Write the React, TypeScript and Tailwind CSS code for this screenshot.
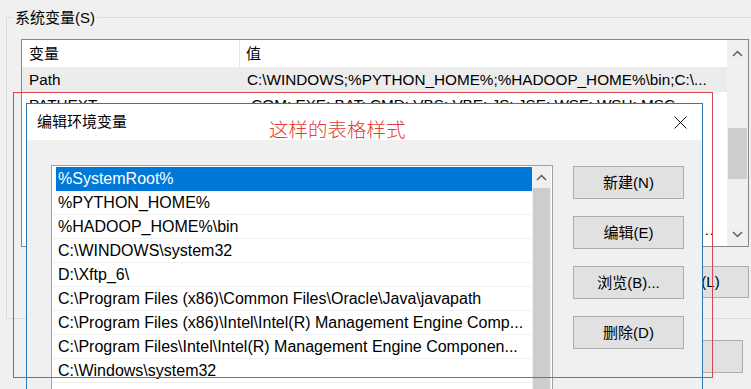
import React from "react";

const bgRows: [string, string][] = [
  ["Path", "C:\\WINDOWS;%PYTHON_HOME%;%HADOOP_HOME%\\bin;C:\\..."],
  ["PATHEXT", ".COM;.EXE;.BAT;.CMD;.VBS;.VBE;.JS;.JSE;.WSF;.WSH;.MSC"],
  ["PROCESSOR_ARCHITECTURE", "AMD64"],
  ["PROCESSOR_IDENTIFIER", "Intel64 Family 6 Model 142 Stepping 10, GenuineIntel"],
  ["PROCESSOR_LEVEL", "6"],
  ["PROCESSOR_REVISION", "8e0a"],
  ["PSModulePath", "%ProgramFiles%\\WindowsPowerShell\\Modules;C:\\WINDOWS\\system32\\WindowsPowerShell\\v1.0\\Modules"],
  ["TEMP", "C:\\WINDOWS\\TEMP"],
];

const dlgRows = [
  "%SystemRoot%",
  "%PYTHON_HOME%",
  "%HADOOP_HOME%\\bin",
  "C:\\WINDOWS\\system32",
  "D:\\Xftp_6\\",
  "C:\\Program Files (x86)\\Common Files\\Oracle\\Java\\javapath",
  "C:\\Program Files (x86)\\Intel\\Intel(R) Management Engine Comp...",
  "C:\\Program Files\\Intel\\Intel(R) Management Engine Componen...",
  "C:\\Windows\\system32",
  "",
];

function ChevronUp() {
  return (
    <svg width="11" height="7" viewBox="0 0 11 7">
      <polyline points="1,6 5.5,1.5 10,6" fill="none" stroke="#606060" strokeWidth="1.5" />
    </svg>
  );
}
function ChevronDown() {
  return (
    <svg width="11" height="7" viewBox="0 0 11 7">
      <polyline points="1,1 5.5,5.5 10,1" fill="none" stroke="#606060" strokeWidth="1.5" />
    </svg>
  );
}

function WinButton({ label, className = "" }: { label: string; className?: string }) {
  return (
    <div
      className={
        "flex items-center justify-center bg-[#e1e1e1] border border-[#adadad] text-[15px] text-black whitespace-nowrap " +
        className
      }
    >
      {label}
    </div>
  );
}

export default function App() {
  return (
    <div className="relative w-[751px] h-[389px] overflow-hidden bg-[#f0f0f0] font-['Liberation_Sans','Noto_Sans_CJK_SC',sans-serif] text-[15px] text-black leading-[20px]">
      {/* Background window: system variables */}
      <div className="pt-[17px] pl-[6px]">
        <div className="relative w-[800px] h-[302px] border-t border-l border-b border-[#dcdcdc] pl-[14px] pt-[21px]">
          <div className="absolute left-[6px] top-[-10px] px-[2px] bg-[#f0f0f0] h-[20px] flex items-center">
            系统变量(S)
          </div>
          <div className="w-[728px] h-[208px] border border-[#828790] bg-white flex overflow-hidden">
            <div className="flex-1 flex flex-col min-w-0">
              <div className="h-[27px] flex items-center shrink-0">
                <div className="w-[218px] pl-[7px] h-full flex items-center border-r border-[#e5e5e5]">变量</div>
                <div className="pl-[6px]">值</div>
              </div>
              {bgRows.map(([k, v], i) => (
                <div
                  key={k}
                  className={
                    "h-[25px] flex items-center shrink-0 text-[15.3px] " + (i === 0 ? "bg-[#ececec]" : "")
                  }
                >
                  <div className="w-[218px] pl-[7px] whitespace-nowrap overflow-hidden">{k}</div>
                  <div className="w-[478px] pl-[7px] whitespace-nowrap overflow-hidden text-ellipsis">{v}</div>
                </div>
              ))}
            </div>
            <div className="w-[21px] shrink-0 bg-[#f0f0f0] flex flex-col items-center">
              <div className="h-[25px] flex items-center justify-center mt-[1px]">
                <ChevronUp />
              </div>
              <div className="h-[62px]" />
              <div className="w-[19px] h-[51px] bg-[#cdcdcd]" />
              <div className="flex-1" />
              <div className="h-[22px] flex items-center justify-center mb-[1px]">
                <ChevronDown />
              </div>
            </div>
          </div>
          <div className="w-[728px] flex justify-end gap-[10px] mt-[19px]">
            <WinButton label="新建(W)..." className="w-[111px] h-[32px]" />
            <WinButton label="编辑(I)..." className="w-[111px] h-[32px]" />
            <WinButton label="删除(L)" className="w-[111px] h-[32px] pl-[4px]" />
          </div>
        </div>
        <div className="w-[737px] flex justify-end gap-[10px] mt-[21px]">
          <WinButton label="确定" className="w-[113px] h-[33px]" />
          <WinButton label="取消" className="w-[113px] h-[33px] pr-[12px]" />
        </div>
      </div>

      {/* Foreground dialog: 编辑环境变量 */}
      <div className="absolute left-[26px] top-[103px] w-[677px] h-[320px] border border-[#2b78b6] bg-[#f0f0f0] flex flex-col">
        <div className="h-[36px] bg-white flex items-center justify-between pl-[10px] pr-[14px] shrink-0">
          <span>编辑环境变量</span>
          <svg width="13" height="13" viewBox="0 0 13 13" className="mr-[1px]">
            <line x1="0.5" y1="0.5" x2="12.5" y2="12.5" stroke="#111" strokeWidth="1" />
            <line x1="12.5" y1="0.5" x2="0.5" y2="12.5" stroke="#111" strokeWidth="1" />
          </svg>
        </div>
        <div className="flex pl-[24px] pt-[25px] gap-[20px]">
          <div className="w-[502px] h-[260px] border border-[#a0a0a0] bg-white flex overflow-hidden">
            <div className="w-[480px] flex flex-col pt-[1px] shrink-0 text-[16px]">
              {dlgRows.map((r, i) => (
                <div
                  key={i}
                  className={
                    "h-[24px] shrink-0 flex items-center whitespace-nowrap overflow-hidden " +
                    (i === 0
                      ? "ml-[4px] pl-[2px] bg-[#0078d7] text-white"
                      : "pl-[6px] border-b border-[#f0f0f0]")
                  }
                >
                  {r}
                </div>
              ))}
            </div>
            <div className="w-[19px] shrink-0 bg-[#f0f0f0] flex flex-col items-center">
              <div className="h-[21px] flex items-center justify-center mt-[1px]">
                <ChevronUp />
              </div>
              <div className="w-[17px] flex-1 bg-[#cdcdcd]" />
            </div>
          </div>
          <div className="flex flex-col gap-[17px] pt-[1px]">
            <WinButton label="新建(N)" className="w-[111px] h-[33px]" />
            <WinButton label="编辑(E)" className="w-[111px] h-[33px]" />
            <WinButton label="浏览(B)..." className="w-[111px] h-[33px]" />
            <WinButton label="删除(D)" className="w-[111px] h-[33px]" />
          </div>
        </div>
      </div>

      {/* Red annotation */}
      <div className="absolute left-[13px] top-[92px] w-[700px] h-[286px] border border-[#d9464c] pointer-events-none" />
      <div className="absolute left-[269px] top-[119px] text-[19.5px] font-light text-[#e23b3b] font-['Noto_Sans_CJK_SC',sans-serif] leading-none">
        这样的表格样式
      </div>
    </div>
  );
}
